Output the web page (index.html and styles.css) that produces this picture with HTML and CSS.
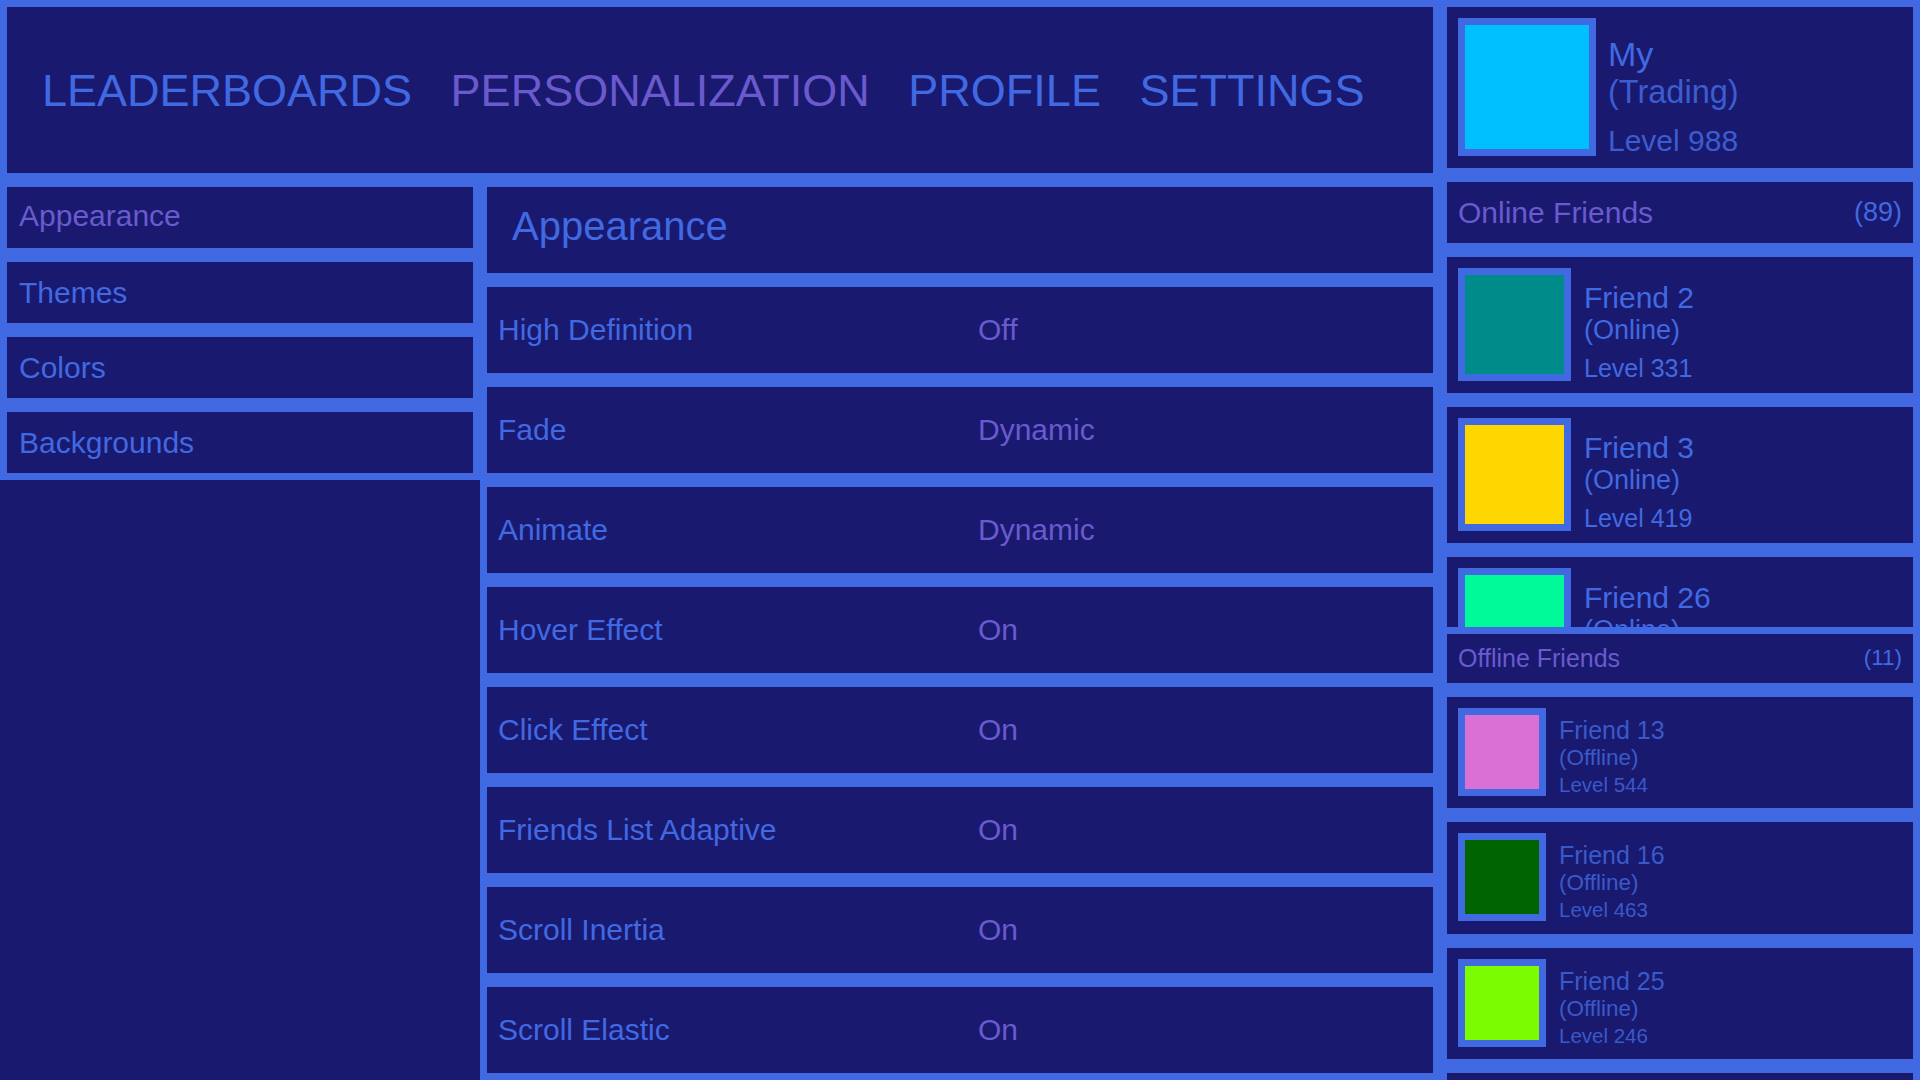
FILE: index.html
```
<!DOCTYPE html>
<html lang="en">
<head>
<meta charset="utf-8">
<title>Personalization - Appearance</title>
<link rel="stylesheet" href="styles.css">
</head>
<body>
<div class="app">
  <div class="main">
    <header class="topbar">
      <nav class="nav">
        <span class="nav-item">LEADERBOARDS</span>
        <span class="nav-item active">PERSONALIZATION</span>
        <span class="nav-item">PROFILE</span>
        <span class="nav-item">SETTINGS</span>
      </nav>
    </header>
    <div class="content">
      <aside class="sidebar">
        <div class="side-item active">Appearance</div>
        <div class="side-item">Themes</div>
        <div class="side-item">Colors</div>
        <div class="side-item">Backgrounds</div>
      </aside>
      <section class="settings">
        <div class="settings-title">Appearance</div>
        <div class="row"><span class="label">High Definition</span><span class="value">Off</span></div>
        <div class="row"><span class="label">Fade</span><span class="value">Dynamic</span></div>
        <div class="row"><span class="label">Animate</span><span class="value">Dynamic</span></div>
        <div class="row"><span class="label">Hover Effect</span><span class="value">On</span></div>
        <div class="row"><span class="label">Click Effect</span><span class="value">On</span></div>
        <div class="row"><span class="label">Friends List Adaptive</span><span class="value">On</span></div>
        <div class="row"><span class="label">Scroll Inertia</span><span class="value">On</span></div>
        <div class="row"><span class="label">Scroll Elastic</span><span class="value">On</span></div>
      </section>
    </div>
  </div>
  <aside class="friends">
    <div class="card profile">
      <div class="avatar c-deepskyblue"></div>
      <div class="info">
        <div class="name">My</div>
        <div class="status">(Trading)</div>
        <div class="level">Level 988</div>
      </div>
    </div>
    <div class="group-head online">
      <span>Online Friends</span><span class="count">(89)</span>
    </div>
    <div class="list online-list">
      <div class="card friend">
        <div class="avatar c-darkcyan"></div>
        <div class="info">
          <div class="name">Friend 2</div>
          <div class="status">(Online)</div>
          <div class="level">Level 331</div>
        </div>
      </div>
      <div class="card friend">
        <div class="avatar c-gold"></div>
        <div class="info">
          <div class="name">Friend 3</div>
          <div class="status">(Online)</div>
          <div class="level">Level 419</div>
        </div>
      </div>
      <div class="card friend">
        <div class="avatar c-springgreen"></div>
        <div class="info">
          <div class="name">Friend 26</div>
          <div class="status">(Online)</div>
          <div class="level">Level 152</div>
        </div>
      </div>
    </div>
    <div class="group-head offline">
      <span>Offline Friends</span><span class="count">(11)</span>
    </div>
    <div class="list offline-list">
      <div class="card friend off">
        <div class="avatar c-orchid"></div>
        <div class="info">
          <div class="name">Friend 13</div>
          <div class="status">(Offline)</div>
          <div class="level">Level 544</div>
        </div>
      </div>
      <div class="card friend off">
        <div class="avatar c-darkgreen"></div>
        <div class="info">
          <div class="name">Friend 16</div>
          <div class="status">(Offline)</div>
          <div class="level">Level 463</div>
        </div>
      </div>
      <div class="card friend off">
        <div class="avatar c-lawngreen"></div>
        <div class="info">
          <div class="name">Friend 25</div>
          <div class="status">(Offline)</div>
          <div class="level">Level 246</div>
        </div>
      </div>
      <div class="card friend off">
        <div class="avatar c-salmon"></div>
        <div class="info">
          <div class="name">Friend 31</div>
          <div class="status">(Offline)</div>
          <div class="level">Level 120</div>
        </div>
      </div>
    </div>
  </aside>
</div>
</body>
</html>
```

FILE: styles.css
```
* {
  box-sizing: border-box;
}

html,
body {
  margin: 0;
  padding: 0;
}

body {
  width: 1920px;
  height: 1080px;
  overflow: hidden;
  background: #191970;
  font-family: "Liberation Sans", Arial, sans-serif;
  line-height: 1;
  color: #4169e1;
}

.app {
  display: flex;
  height: 1080px;
}

.main {
  width: 1440px;
  height: 1080px;
  display: flex;
  flex-direction: column;
  flex: none;
}

/* ---------- top navigation ---------- */
.topbar {
  flex: none;
  height: 180px;
  padding: 7px;
  background: #4169e1;
}

.nav {
  height: 166px;
  display: flex;
  align-items: center;
  gap: 38.5px;
  padding-left: 35px;
  background: #191970;
  font-size: 45px;
  color: #4169e1;
}

.nav-item.active {
  color: #6a5acd;
}

/* ---------- content ---------- */
.content {
  flex: 1;
  min-height: 0;
  display: flex;
  align-items: flex-start;
}

.sidebar {
  width: 480px;
  flex: none;
  display: flex;
  flex-direction: column;
  gap: 14px;
  padding: 7px;
  background: #4169e1;
}

.side-item {
  height: 61px;
  display: flex;
  align-items: center;
  padding-left: 12px;
  background: #191970;
  font-size: 30px;
  color: #4169e1;
}

.side-item.active {
  color: #6a5acd;
  padding-bottom: 4px;
}

.settings {
  width: 960px;
  flex: none;
  align-self: stretch;
  display: flex;
  flex-direction: column;
  gap: 14px;
  padding: 7px;
  overflow: hidden;
  background: #4169e1;
}

.settings-title {
  flex: none;
  height: 86px;
  padding: 19px 0 0 25px;
  background: #191970;
  font-size: 40px;
  color: #4169e1;
}

.row {
  flex: none;
  height: 86px;
  display: flex;
  align-items: center;
  padding-left: 11px;
  background: #191970;
  font-size: 30px;
}

.label {
  width: 480px;
  flex: none;
  color: #4169e1;
}

.value {
  color: #6a5acd;
}

/* ---------- friends column ---------- */
.friends {
  width: 480px;
  height: 1080px;
  flex: none;
  display: flex;
  flex-direction: column;
  overflow: hidden;
  background: #4169e1;
}

.card {
  flex: none;
  margin: 7px;
  display: flex;
  align-items: flex-start;
  padding: 11px;
  background: #191970;
}

.avatar {
  flex: none;
  border: 7px solid #4169e1;
}

.info {
  margin-left: 13px;
  display: flex;
  flex-direction: column;
  align-items: flex-start;
  white-space: nowrap;
}

/* profile */
.profile {
  height: 161px;
}

.profile .avatar {
  width: 138px;
  height: 138px;
}

.profile .info {
  margin-left: 12px;
  padding-top: 19px;
}

.profile .name {
  font-size: 34px;
  color: #4169e1;
}

.profile .status {
  margin-top: 5px;
  font-size: 32.5px;
  color: #3b5dcf;
}

.profile .level {
  margin-top: 17px;
  font-size: 30px;
  color: #3b5dcf;
}

/* group headers */
.group-head {
  flex: none;
  margin: 7px;
  display: flex;
  align-items: center;
  justify-content: space-between;
  padding: 0 11px 0 11px;
  background: #191970;
  color: #6a5acd;
}

.group-head .count {
  color: #4169e1;
}

.group-head.online {
  height: 61px;
  font-size: 30px;
}

.group-head.online .count {
  font-size: 27px;
}

.group-head.offline {
  height: 48.5px;
  font-size: 25px;
}

.group-head.offline .count {
  font-size: 22.5px;
}

/* lists */
.list {
  display: flex;
  flex-direction: column;
  overflow: hidden;
}

.online-list {
  flex: none;
  height: 377px;
}

.offline-list {
  flex: 1;
  min-height: 0;
}

/* online friend card */
.friend {
  height: 136px;
}

.friend .avatar {
  width: 113px;
  height: 113px;
}

.friend .info {
  padding-top: 15px;
}

.friend .name {
  font-size: 30px;
}

.friend .status {
  margin-top: 4px;
  font-size: 27px;
}

.friend .level {
  margin-top: 11.5px;
  font-size: 25px;
}

/* offline friend card */
.friend.off {
  height: 111.5px;
}

.friend.off .avatar {
  width: 88px;
  height: 88px;
}

.friend.off .info {
  padding-top: 10px;
  color: #3a59c9;
}

.friend.off .name {
  font-size: 25px;
}

.friend.off .status {
  margin-top: 4px;
  font-size: 22.5px;
}

.friend.off .level {
  margin-top: 5.5px;
  font-size: 20.5px;
}

/* avatar colours */
.c-deepskyblue { background: #00bfff; }
.c-darkcyan { background: #008b8b; }
.c-gold { background: #ffd700; }
.c-springgreen { background: #00fa9a; }
.c-orchid { background: #da70d6; }
.c-darkgreen { background: #006400; }
.c-lawngreen { background: #7cfc00; }
.c-salmon { background: #fa8072; }
```
